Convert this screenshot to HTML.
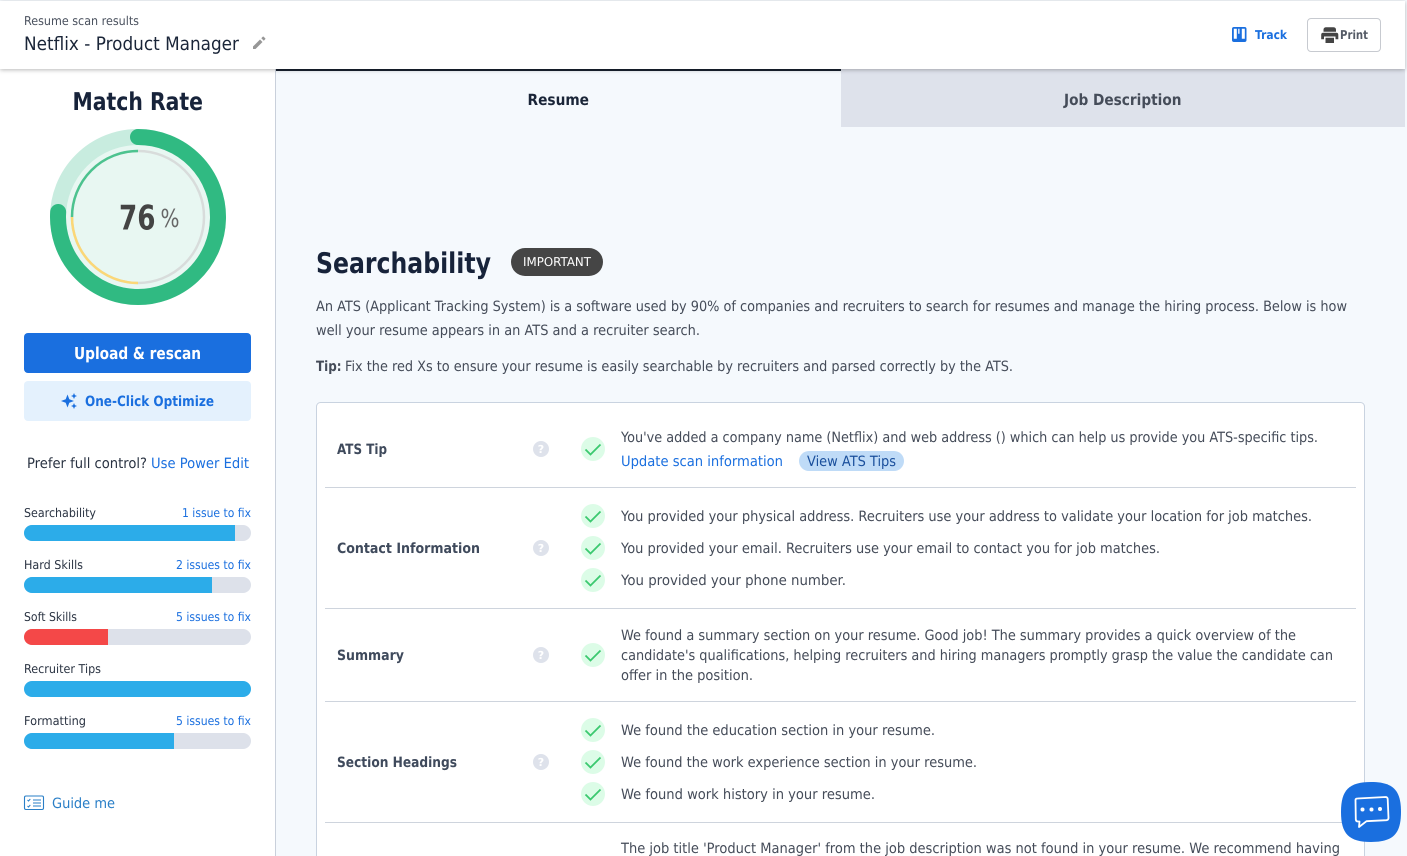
<!DOCTYPE html>
<html lang="en">
<head>
<meta charset="utf-8">
<title>Resume scan results</title>
<style>
html,body{margin:0;padding:0;width:1407px;height:856px;overflow:hidden;background:#f5f9fd}
svg{display:block;position:absolute;left:0;top:0}
text{font-family:"DejaVu Sans","Liberation Sans",sans-serif;font-size:14.200px;fill:#454c59;text-rendering:geometricPrecision}
.b{font-weight:700}
.link{fill:#1a6fdf}
.s12{font-size:12.200px}
.lab{font-size:12.200px;fill:#2a3342}
</style>
</head>
<body>
<svg width="1407" height="856" viewBox="0 0 1407 856" xmlns="http://www.w3.org/2000/svg">
<defs>
<filter id="sh" x="-2%" y="-20%" width="104%" height="150%"><feDropShadow dx="0" dy="1" stdDeviation="2" flood-color="#000" flood-opacity=".28"/></filter>
</defs>
<rect width="1407" height="856" fill="#f5f9fd"/>

<!-- sidebar -->
<rect x="0" y="60" width="275" height="796" fill="#fff"/>
<rect x="275" y="60" width="1" height="796" fill="#c9d0db"/>

<!-- tabs -->
<rect x="841" y="69" width="564" height="58" fill="#dee2eb"/>
<rect x="276" y="69" width="565" height="2" fill="#18212f"/>
<text x="527.500" y="105" class="b" style="font-size:15.500px;fill:#1a2538" textLength="61.500" lengthAdjust="spacingAndGlyphs">Resume</text>
<text x="1064" y="105" class="b" style="font-size:15.500px;fill:#454c59" textLength="117.500" lengthAdjust="spacingAndGlyphs">Job Description</text>

<!-- header -->
<rect x="0" y="1" width="1405" height="68" fill="#fff" filter="url(#sh)"/>
<text x="24" y="25" style="font-size:12.200px;fill:#4a515e" textLength="115" lengthAdjust="spacingAndGlyphs">Resume scan results</text>
<text x="24" y="50" style="font-size:18.500px;fill:#1a2538" textLength="215" lengthAdjust="spacingAndGlyphs">Netflix - Product Manager</text>
<path d="M253 49v-2.500l7-7 2.500 2.500-7 7zM261.300 38.200l1.400-1.400a.7.700 0 0 1 1 0l1.500 1.500a.7.700 0 0 1 0 1l-1.400 1.400z" fill="#979797"/>

<rect x="1232" y="27" width="14.500" height="15" rx="2" fill="#1a6fdf"/>
<path d="M1233.800 28.800h3v10h-3zM1238.200 28.800h1.300v5h-1.300zM1241.800 28.800h3v10h-3z" fill="#fff"/>
<text x="1255" y="39" class="s12 link" style="font-weight:700" textLength="32" lengthAdjust="spacingAndGlyphs">Track</text>

<rect x="1307.500" y="18.500" width="73" height="33" rx="3.500" fill="#fff" stroke="#c7cad0"/>
<path d="M1326 27.200h7.500a2.500 2.500 0 0 1 2.500 2.500v2h-12.500v-2a2.500 2.500 0 0 1 2.500-2.500zM1323.200 32.800h13.100a2 2 0 0 1 2 2v4.400h-2.800v-2.700h-11.500v2.700h-2.800v-4.400a2 2 0 0 1 2-2zM1325.500 37.800h8.500v5.200h-8.500z" fill="#444"/>
<text x="1340" y="39" class="s12" style="font-weight:700;fill:#555b66" textLength="28" lengthAdjust="spacingAndGlyphs">Print</text>

<!-- match rate -->
<text x="72.500" y="110" class="b" style="font-size:24.500px;fill:#17233a" textLength="130.500" lengthAdjust="spacingAndGlyphs">Match Rate</text>
<circle cx="138" cy="217" r="80" fill="#e8f7f2" stroke="#c8ecdf" stroke-width="16"/>
<path d="M138 137A80 80 0 1 1 58.160 212" fill="none" stroke="#30ba82" stroke-width="16" stroke-linecap="round"/>
<circle cx="138" cy="217" r="66" fill="none" stroke="#d8dcdb" stroke-width="2.500"/>
<path d="M72 217A66 66 0 0 1 138 151" fill="none" stroke="#4cc38f" stroke-width="2.500"/>
<path d="M138 283A66 66 0 0 1 72 217" fill="none" stroke="#fbd777" stroke-width="2.500"/>
<text x="119" y="229.500" class="b" style="font-size:34px;fill:#444" textLength="36.500" lengthAdjust="spacingAndGlyphs">76</text>
<text x="160.500" y="227" style="font-size:25px;fill:#666" textLength="19" lengthAdjust="spacingAndGlyphs">%</text>

<!-- buttons -->
<rect x="24" y="333" width="227" height="40" rx="4" fill="#1a6fdf"/>
<text x="74" y="359" class="b" style="font-size:16.500px;fill:#fff" textLength="127" lengthAdjust="spacingAndGlyphs">Upload &amp; rescan</text>
<rect x="24" y="381" width="227" height="40" rx="4" fill="#e4f1fd"/>
<path d="M67.500 394.500l1.800 4.700 4.700 1.800-4.700 1.800-1.800 4.700-1.800-4.700-4.700-1.800 4.700-1.800z" fill="#1a6fdf"/>
<path d="M74 393l.9 2.100 2.100.9-2.100.9-.9 2.100-.9-2.100-2.100-.9 2.100-.9zM74 403l.9 2.100 2.100.9-2.100.9-.9 2.100-.9-2.100-2.100-.9 2.100-.9z" fill="#1a6fdf"/>
<text x="85" y="406" class="b link" textLength="129" lengthAdjust="spacingAndGlyphs">One-Click Optimize</text>

<text x="27" y="468" style="fill:#2a3342" textLength="120" lengthAdjust="spacingAndGlyphs">Prefer full control?</text>
<text x="151" y="468" class="link" textLength="98" lengthAdjust="spacingAndGlyphs">Use Power Edit</text>

<!-- progress rows -->
<text x="24" y="517" class="lab" textLength="72" lengthAdjust="spacingAndGlyphs">Searchability</text>
<text x="182" y="517" class="s12 link" textLength="69" lengthAdjust="spacingAndGlyphs">1 issue to fix</text>
<clipPath id="b1"><rect x="24" y="525" width="227" height="16" rx="8"/></clipPath>
<g clip-path="url(#b1)"><rect x="24" y="525" width="227" height="16" fill="#dde1ea"/><rect x="24" y="525" width="211" height="16" fill="#2cace9"/></g>

<text x="24" y="569" class="lab" textLength="59" lengthAdjust="spacingAndGlyphs">Hard Skills</text>
<text x="176" y="569" class="s12 link" textLength="75" lengthAdjust="spacingAndGlyphs">2 issues to fix</text>
<clipPath id="b2"><rect x="24" y="577" width="227" height="16" rx="8"/></clipPath>
<g clip-path="url(#b2)"><rect x="24" y="577" width="227" height="16" fill="#dde1ea"/><rect x="24" y="577" width="188" height="16" fill="#2cace9"/></g>

<text x="24" y="621" class="lab" textLength="53" lengthAdjust="spacingAndGlyphs">Soft Skills</text>
<text x="176" y="621" class="s12 link" textLength="75" lengthAdjust="spacingAndGlyphs">5 issues to fix</text>
<clipPath id="b3"><rect x="24" y="629" width="227" height="16" rx="8"/></clipPath>
<g clip-path="url(#b3)"><rect x="24" y="629" width="227" height="16" fill="#dde1ea"/><rect x="24" y="629" width="84" height="16" fill="#f44848"/></g>

<text x="24" y="673" class="lab" textLength="77" lengthAdjust="spacingAndGlyphs">Recruiter Tips</text>
<rect x="24" y="681" width="227" height="16" rx="8" fill="#2cace9"/>

<text x="24" y="725" class="lab" textLength="62" lengthAdjust="spacingAndGlyphs">Formatting</text>
<text x="176" y="725" class="s12 link" textLength="75" lengthAdjust="spacingAndGlyphs">5 issues to fix</text>
<clipPath id="b4"><rect x="24" y="733" width="227" height="16" rx="8"/></clipPath>
<g clip-path="url(#b4)"><rect x="24" y="733" width="227" height="16" fill="#dde1ea"/><rect x="24" y="733" width="150" height="16" fill="#2cace9"/></g>

<!-- guide me -->
<rect x="24.500" y="796" width="19" height="13.500" rx="1.500" fill="none" stroke="#2a7fc7" stroke-width="1.100"/>
<path d="M33 800h8M33 803h8M33 806h8" stroke="#2a7fc7" stroke-width="1.100" fill="none"/>
<path d="M27.500 800l1 1 1.800-2M27.500 806l1 1 1.800-2" stroke="#2a7fc7" stroke-width="1" fill="none"/>
<text x="52" y="808" style="fill:#2a7fc7" textLength="63" lengthAdjust="spacingAndGlyphs">Guide me</text>

<!-- searchability heading -->
<text x="316" y="273" class="b" style="font-size:28.500px;fill:#17233a" textLength="175" lengthAdjust="spacingAndGlyphs">Searchability</text>
<rect x="511" y="248" width="92" height="28" rx="14" fill="#454545"/>
<text x="523" y="266" style="font-size:12.200px;fill:#fff" textLength="68" lengthAdjust="spacingAndGlyphs">IMPORTANT</text>
<text x="316" y="311" textLength="1031" lengthAdjust="spacingAndGlyphs">An ATS (Applicant Tracking System) is a software used by 90% of companies and recruiters to search for resumes and manage the hiring process. Below is how</text>
<text x="316" y="335" textLength="384" lengthAdjust="spacingAndGlyphs">well your resume appears in an ATS and a recruiter search.</text>
<text x="316" y="371" class="b" textLength="25.500" lengthAdjust="spacingAndGlyphs">Tip:</text>
<text x="345" y="371" textLength="668" lengthAdjust="spacingAndGlyphs">Fix the red Xs to ensure your resume is easily searchable by recruiters and parsed correctly by the ATS.</text>

<!-- card -->
<rect x="316.500" y="402.500" width="1048" height="480" rx="4" fill="#fff" stroke="#c9d3e0"/>
<path d="M325 487.500h1031M325 608.500h1031M325 701.500h1031M325 822.500h1031" stroke="#ced4dd" fill="none"/>

<text x="337" y="454" class="b" style="fill:#3f4a5c" textLength="50" lengthAdjust="spacingAndGlyphs">ATS Tip</text>
<text x="337" y="553" class="b" style="fill:#3f4a5c" textLength="143" lengthAdjust="spacingAndGlyphs">Contact Information</text>
<text x="337" y="660" class="b" style="fill:#3f4a5c" textLength="67" lengthAdjust="spacingAndGlyphs">Summary</text>
<text x="337" y="767" class="b" style="fill:#3f4a5c" textLength="120" lengthAdjust="spacingAndGlyphs">Section Headings</text>

<g fill="#dee2eb">
<circle cx="541" cy="449" r="8"/><circle cx="541" cy="548" r="8"/><circle cx="541" cy="655" r="8"/><circle cx="541" cy="762" r="8"/>
</g>
<g text-anchor="middle">
<text x="541" y="453" class="b" style="font-size:11px;fill:#fff">?</text>
<text x="541" y="552" class="b" style="font-size:11px;fill:#fff">?</text>
<text x="541" y="659" class="b" style="font-size:11px;fill:#fff">?</text>
<text x="541" y="766" class="b" style="font-size:11px;fill:#fff">?</text>
</g>

<g fill="#dcfce7">
<circle cx="593" cy="449" r="12"/><circle cx="593" cy="516" r="12"/><circle cx="593" cy="548" r="12"/><circle cx="593" cy="580" r="12"/>
<circle cx="593" cy="655" r="12"/><circle cx="593" cy="730" r="12"/><circle cx="593" cy="762" r="12"/><circle cx="593" cy="794" r="12"/>
</g>
<g fill="none" stroke="#3bc96f" stroke-width="1.800">
<path d="M585.500 449.500l5 5 10-10"/><path d="M585.500 516.500l5 5 10-10"/><path d="M585.500 548.500l5 5 10-10"/><path d="M585.500 580.500l5 5 10-10"/>
<path d="M585.500 655.500l5 5 10-10"/><path d="M585.500 730.500l5 5 10-10"/><path d="M585.500 762.500l5 5 10-10"/><path d="M585.500 794.500l5 5 10-10"/>
</g>

<text x="621" y="442" textLength="697" lengthAdjust="spacingAndGlyphs">You've added a company name (Netflix) and web address () which can help us provide you ATS-specific tips.</text>
<text x="621" y="466" class="link" textLength="162" lengthAdjust="spacingAndGlyphs">Update scan information</text>
<rect x="799" y="451" width="105" height="20" rx="10" fill="#bfdbf7"/>
<text x="807" y="466" style="fill:#1a4f9c" textLength="89" lengthAdjust="spacingAndGlyphs">View ATS Tips</text>

<text x="621" y="521" textLength="691" lengthAdjust="spacingAndGlyphs">You provided your physical address. Recruiters use your address to validate your location for job matches.</text>
<text x="621" y="553" textLength="539" lengthAdjust="spacingAndGlyphs">You provided your email. Recruiters use your email to contact you for job matches.</text>
<text x="621" y="585" textLength="225" lengthAdjust="spacingAndGlyphs">You provided your phone number.</text>

<text x="621" y="640" textLength="675" lengthAdjust="spacingAndGlyphs">We found a summary section on your resume. Good job! The summary provides a quick overview of the</text>
<text x="621" y="660" textLength="712" lengthAdjust="spacingAndGlyphs">candidate's qualifications, helping recruiters and hiring managers promptly grasp the value the candidate can</text>
<text x="621" y="680" textLength="132" lengthAdjust="spacingAndGlyphs">offer in the position.</text>

<text x="621" y="735" textLength="314" lengthAdjust="spacingAndGlyphs">We found the education section in your resume.</text>
<text x="621" y="767" textLength="356" lengthAdjust="spacingAndGlyphs">We found the work experience section in your resume.</text>
<text x="621" y="799" textLength="254" lengthAdjust="spacingAndGlyphs">We found work history in your resume.</text>

<text x="621" y="853" textLength="719" lengthAdjust="spacingAndGlyphs">The job title 'Product Manager' from the job description was not found in your resume. We recommend having</text>

<!-- chat -->
<path d="M1371 782c22 0 30 8 30 30s-8 30-30 30-30-8-30-30 8-30 30-30z" fill="#1a6fdf"/>
<path d="M1357.500 798.500l28-1.500q2 0 2.200 2l.8 19q0 2-2 2.200l-20 1-7.500 5.800 .5-5.500-1.500 0q-2 0-2.200-2l-.3-19.500q0-1.500 2-1.500z" fill="none" stroke="#fff" stroke-width="1.800" stroke-linejoin="round"/>
<circle cx="1362.500" cy="809.500" r="2" fill="#fff"/><circle cx="1371.500" cy="809.500" r="2" fill="#fff"/><circle cx="1380" cy="809" r="2" fill="#fff"/>
</svg>
</body>
</html>
